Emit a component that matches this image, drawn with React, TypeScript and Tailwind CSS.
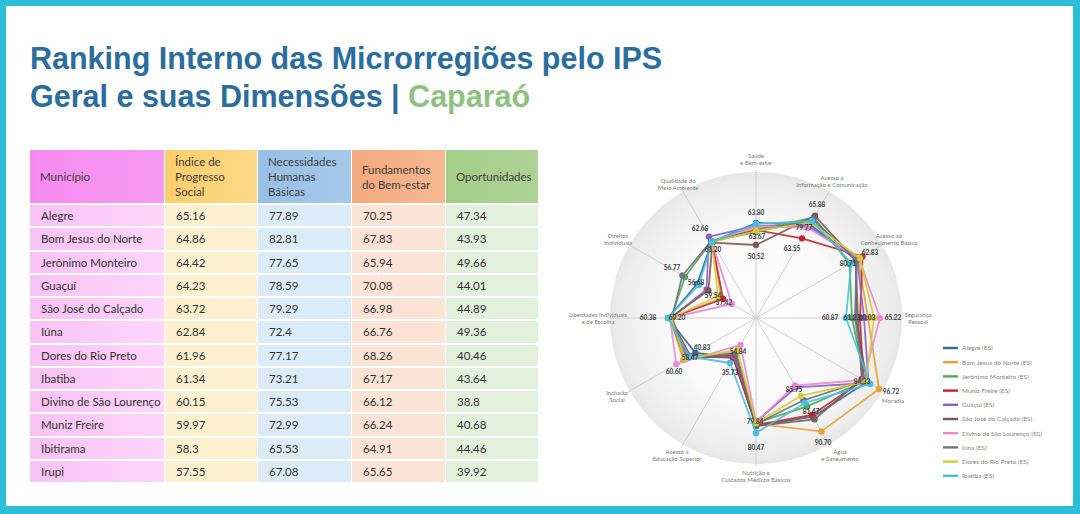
import React from "react";

interface Row {
  name: string;
  ips: string;
  nhb: string;
  fbe: string;
  op: string;
}

const ROWS: Row[] = [
  { name: "Alegre", ips: "65.16", nhb: "77.89", fbe: "70.25", op: "47.34" },
  { name: "Bom Jesus do Norte", ips: "64.86", nhb: "82.81", fbe: "67.83", op: "43.93" },
  { name: "Jerônimo Monteiro", ips: "64.42", nhb: "77.65", fbe: "65.94", op: "49.66" },
  { name: "Guaçuí", ips: "64.23", nhb: "78.59", fbe: "70.08", op: "44.01" },
  { name: "São José do Calçado", ips: "63.72", nhb: "79.29", fbe: "66.98", op: "44.89" },
  { name: "Iúna", ips: "62.84", nhb: "72.4", fbe: "66.76", op: "49.36" },
  { name: "Dores do Rio Preto", ips: "61.96", nhb: "77.17", fbe: "68.26", op: "40.46" },
  { name: "Ibatiba", ips: "61.34", nhb: "73.21", fbe: "67.17", op: "43.64" },
  { name: "Divino de São Lourenço", ips: "60.15", nhb: "75.53", fbe: "66.12", op: "38.8" },
  { name: "Muniz Freire", ips: "59.97", nhb: "72.99", fbe: "66.24", op: "40.68" },
  { name: "Ibitirama", ips: "58.3", nhb: "65.53", fbe: "64.91", op: "44.46" },
  { name: "Irupi", ips: "57.55", nhb: "67.08", fbe: "65.65", op: "39.92" },
];

// radar: page coordinates, centre of the web
const CX = 756;
const CY = 318;

const AXIS_LABELS: { lines: string[]; x: number; y: number }[] = [
  { lines: ["Saúde", "e Bem-estar"], x: 756, y: 158 },
  { lines: ["Acesso à", "Informação e Comunicação"], x: 832, y: 180 },
  { lines: ["Acesso ao", "Conhecimento Básico"], x: 889, y: 238 },
  { lines: ["Segurança", "Pessoal"], x: 918, y: 317 },
  { lines: ["Moradia"], x: 893, y: 403 },
  { lines: ["Água", "e Saneamento"], x: 840, y: 454 },
  { lines: ["Nutrição e", "Cuidados Médicos Básicos"], x: 756, y: 475 },
  { lines: ["Acesso à", "Educação Superior"], x: 677, y: 454 },
  { lines: ["Inclusão", "Social"], x: 617, y: 395 },
  { lines: ["Liberdades Individuais", "e de Escolha"], x: 598, y: 317 },
  { lines: ["Direitos", "Individuais"], x: 618, y: 238 },
  { lines: ["Qualidade do", "Meio Ambiente"], x: 678, y: 183 },
];

const SERIES: { name: string; color: string; r: number[] }[] = [
  { name: "Alegre (ES)", color: "#2f6d95", r: [95, 108, 116, 100, 128, 114, 108, 45, 70, 88, 68, 88] },
  { name: "Bom Jesus do Norte (ES)", color: "#eaa235", r: [90, 112, 118, 112, 142, 131, 106, 42, 84, 86, 40, 88] },
  { name: "Jerônimo Monteiro (ES)", color: "#4faa4f", r: [88, 116, 108, 96, 126, 102, 105, 44, 78, 85, 82, 89] },
  { name: "Muniz Freire (ES)", color: "#c0292e", r: [88, 92, 123, 104, 124, 112, 107, 46, 76, 86, 38, 88] },
  { name: "Guaçuí (ES)", color: "#8b62c4", r: [92, 106, 117, 108, 130, 80, 104, 44, 80, 85, 57, 94] },
  { name: "São José do Calçado (ES)", color: "#7d5b55", r: [73, 118, 115, 102, 122, 117, 108, 42, 82, 86, 55, 87] },
  { name: "Divino de São Lourenço (ES)", color: "#e889d2", r: [92, 104, 119, 124, 124, 78, 104, 31, 92, 86, 28, 88] },
  { name: "Iúna (ES)", color: "#727280", r: [86, 114, 116, 99, 125, 95, 106, 40, 79, 84, 85, 89] },
  { name: "Dores do Rio Preto (ES)", color: "#d4cc3a", r: [87, 110, 120, 118, 127, 90, 105, 37, 82, 85, 44, 88] },
  { name: "Ibatiba (ES)", color: "#45c0e2", r: [94, 112, 110, 90, 132, 98, 115, 52, 77, 88, 66, 88] },
];

const VALUE_LABELS: { t: string; x: number; y: number }[] = [
  { t: "63.80", x: 756, y: 215 },
  { t: "65.88", x: 817, y: 207 },
  { t: "79.77", x: 804, y: 230 },
  { t: "63.67", x: 757, y: 239 },
  { t: "50.52", x: 756, y: 259 },
  { t: "63.55", x: 792, y: 251 },
  { t: "62.83", x: 870, y: 255 },
  { t: "80.71", x: 848, y: 266 },
  { t: "60.87", x: 830, y: 320 },
  { t: "61.23", x: 852, y: 320 },
  { t: "60.03", x: 867, y: 320 },
  { t: "65.22", x: 893, y: 320 },
  { t: "84.33", x: 862, y: 384 },
  { t: "96.72", x: 891, y: 394 },
  { t: "85.75", x: 794, y: 392 },
  { t: "81.47", x: 811, y: 414 },
  { t: "90.70", x: 823, y: 445 },
  { t: "79.84", x: 755, y: 424 },
  { t: "80.47", x: 756, y: 450 },
  { t: "54.84", x: 738, y: 354 },
  { t: "35.73", x: 730, y: 375 },
  { t: "40.83", x: 702, y: 350 },
  { t: "58.47", x: 690, y: 360 },
  { t: "60.60", x: 674, y: 374 },
  { t: "60.38", x: 648, y: 320 },
  { t: "60.20", x: 677, y: 320 },
  { t: "56.77", x: 672, y: 270 },
  { t: "56.68", x: 696, y: 285 },
  { t: "59.54", x: 713, y: 298 },
  { t: "37.42", x: 724, y: 305 },
  { t: "62.68", x: 700, y: 231 },
  { t: "61.20", x: 713, y: 252 },
];

function pt(axis: number, r: number) {
  const a = (axis * Math.PI) / 6;
  return { x: CX + Math.sin(a) * r, y: CY - Math.cos(a) * r };
}

function RadarChart() {
  return (
    <svg width={512} height={362} viewBox="0 0 512 362" className="block overflow-visible">
      <defs>
        <radialGradient id="disc" cx="50%" cy="50%" r="50%">
          <stop offset="0%" stopColor="#ffffff" />
          <stop offset="60%" stopColor="#f9f9f9" />
          <stop offset="92%" stopColor="#eeeeee" />
          <stop offset="100%" stopColor="#e7e7e7" />
        </radialGradient>
      </defs>
      <g transform="translate(-560 -140)" fontFamily="Lato, 'Liberation Sans', sans-serif">
        <circle cx={CX} cy={CY} r={146} fill="url(#disc)" />
        {Array.from({ length: 12 }).map((_, i) => {
          const p = pt(i, 148);
          return <line key={i} x1={CX} y1={CY} x2={p.x} y2={p.y} stroke="#cfcfcf" strokeWidth={1} />;
        })}
        {AXIS_LABELS.map((l, i) => (
          <text key={i} x={l.x} y={l.y} fontSize={6} fill="#7a7a7a" textAnchor="middle">
            {l.lines.map((s, j) => (
              <tspan key={j} x={l.x} dy={j === 0 ? 0 : 7}>
                {s}
              </tspan>
            ))}
          </text>
        ))}
        {SERIES.map((s) => {
          const pts = s.r.map((r, i) => pt(i, r));
          const d = pts.map((p) => `${p.x.toFixed(1)},${p.y.toFixed(1)}`).join(" ");
          return (
            <g key={s.name}>
              <polygon points={d} fill="none" stroke={s.color} strokeWidth={1.8} strokeLinejoin="round" opacity={0.9} />
              {pts.map((p, i) => (
                <circle key={i} cx={p.x} cy={p.y} r={3.2} fill={s.color} />
              ))}
            </g>
          );
        })}
        {VALUE_LABELS.map((v, i) => (
          <text key={i} x={v.x} y={v.y} fontSize={6.5} fontWeight={700} fill="#3a3a3a" textAnchor="middle">
            {v.t}
          </text>
        ))}
        {SERIES.map((s, i) => {
          const y = 348 + i * 14.2;
          return (
            <g key={s.name}>
              <line x1={943} y1={y} x2={958} y2={y} stroke={s.color} strokeWidth={2.4} />
              <text x={962} y={y + 2.3} fontSize={6.5} fill="#858585">
                {s.name}
              </text>
            </g>
          );
        })}
      </g>
    </svg>
  );
}

function HeaderCell({ className, children }: { className: string; children: React.ReactNode }) {
  return (
    <div className={`flex items-center px-[10px] leading-[15px] text-[11.5px] text-[#3d3d3d] ${className}`}>
      <div>{children}</div>
    </div>
  );
}

export default function App() {
  const cell = "flex items-center pl-[11px] whitespace-nowrap text-[11.5px] text-[#333333] h-[21.25px]";
  return (
    <div className="w-[1080px] h-[514px] bg-white border-[#2bbfd6] border-t-[6px] border-l-[6px] border-r-[7px] border-b-[8px] overflow-hidden">
      <div className="pl-[24px] pt-[33px]">
        <h1 className="font-['Liberation_Sans',Arial,sans-serif] font-bold text-[30.5px] leading-[38px] text-[#2b6d9d]">
          Ranking Interno das Microrregiões pelo IPS
          <br />
          Geral e suas Dimensões | <span className="text-[#8fc183]">Caparaó</span>
        </h1>

        <div className="flex items-start mt-[25px]">
          <div className="mt-[10px] w-[508px] grid grid-cols-[134px_92px_93px_93px_92px] gap-y-[2px] gap-x-px font-['Lato','Liberation_Sans',sans-serif]">
            <HeaderCell className="h-[53px] bg-gradient-to-r from-[#f68bef] to-[#f79af2]">Município</HeaderCell>
            <HeaderCell className="h-[53px] bg-gradient-to-r from-[#fcce6c] to-[#fdd888]">
              Índice de
              <br />
              Progresso
              <br />
              Social
            </HeaderCell>
            <HeaderCell className="h-[53px] bg-gradient-to-r from-[#98bfe4] to-[#a6c9ea]">
              Necessidades
              <br />
              Humanas
              <br />
              Básicas
            </HeaderCell>
            <HeaderCell className="h-[53px] bg-gradient-to-r from-[#f4a97e] to-[#f6b891]">
              Fundamentos
              <br />
              do Bem-estar
            </HeaderCell>
            <HeaderCell className="h-[53px] bg-gradient-to-r from-[#a4cd88] to-[#acd395]">Oportunidades</HeaderCell>

            {ROWS.map((r) => (
              <React.Fragment key={r.name}>
                <div className={`${cell} bg-gradient-to-r from-[#f9c3f5] to-[#fdd5fb]`}>{r.name}</div>
                <div className={`${cell} bg-[#fdf0cf]`}>{r.ips}</div>
                <div className={`${cell} bg-[#dcebf8]`}>{r.nhb}</div>
                <div className={`${cell} bg-[#fbe3d6]`}>{r.fbe}</div>
                <div className={`${cell} bg-[#e3f0dc]`}>{r.op}</div>
              </React.Fragment>
            ))}
          </div>

          <div className="ml-[22px]">
            <RadarChart />
          </div>
        </div>
      </div>
    </div>
  );
}
